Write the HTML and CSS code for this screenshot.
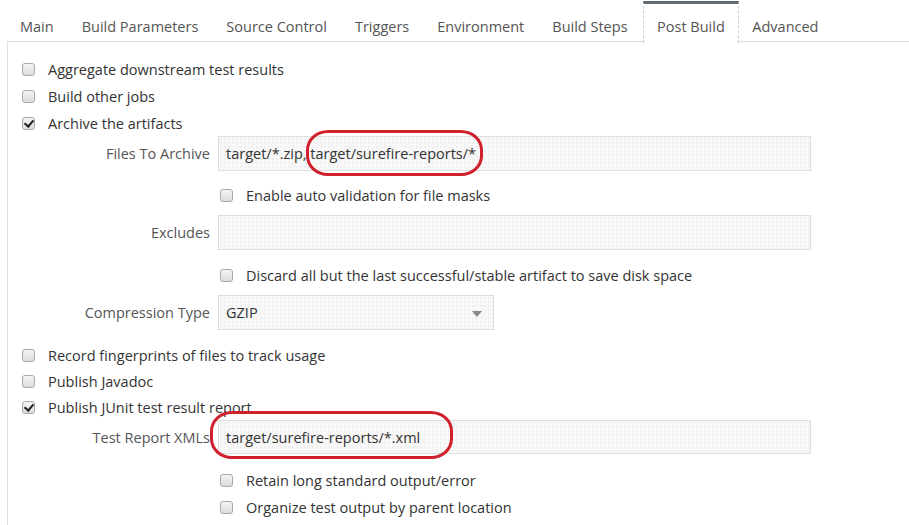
FILE: index.html
```html
<!DOCTYPE html>
<html>
<head>
<meta charset="utf-8">
<link rel="stylesheet" href="styles.css">
</head>
<body>
<div class="page">
  <ul class="tabs">
    <li class="tab">Main</li>
    <li class="tab">Build Parameters</li>
    <li class="tab">Source Control</li>
    <li class="tab">Triggers</li>
    <li class="tab">Environment</li>
    <li class="tab">Build Steps</li>
    <li class="tab active">Post Build</li>
    <li class="tab">Advanced</li>
  </ul>
  <div class="panel">
    <div class="check"><span class="box"></span>Aggregate downstream test results</div>
    <div class="check"><span class="box"></span>Build other jobs</div>
    <div class="check"><span class="box checked"></span>Archive the artifacts</div>

    <div class="field first">
      <label class="lbl">Files To Archive</label>
      <div class="input wide">target/*.zip, target/surefire-reports/*<span class="mark mark1"></span></div>
    </div>
    <div class="check sub e1"><span class="box"></span>Enable auto validation for file masks</div>
    <div class="field">
      <label class="lbl">Excludes</label>
      <div class="input wide"></div>
    </div>
    <div class="check sub"><span class="box"></span>Discard all but the last successful/stable artifact to save disk space</div>
    <div class="field">
      <label class="lbl">Compression Type</label>
      <div class="input select">GZIP<span class="arrow"></span></div>
    </div>

    <div class="check top"><span class="box"></span>Record fingerprints of files to track usage</div>
    <div class="check tight"><span class="box"></span>Publish Javadoc</div>
    <div class="check tight"><span class="box checked"></span>Publish JUnit test result report</div>
    <div class="field junit">
      <label class="lbl">Test Report XMLs</label>
      <div class="input wide">target/surefire-reports/*.xml<span class="mark mark2"></span></div>
    </div>
    <div class="check sub"><span class="box"></span>Retain long standard output/error</div>
    <div class="check sub"><span class="box"></span>Organize test output by parent location</div>
  </div>
</div>
</body>
</html>
```
FILE: styles.css
```css
* { box-sizing: border-box; }
html, body { margin: 0; padding: 0; background: #fff; }
body {
  font-family: "Open Sans", "Noto Sans", sans-serif;
  font-size: 14.5px;
  color: #333;
  width: 909px;
  height: 525px;
  overflow: hidden;
}
.page { padding-left: 7px; }
.tabs {
  list-style: none;
  margin: 0;
  padding: 0;
  display: flex;
  height: 42px;
  border-bottom: 1px solid #dcdcdc;
}
.tab {
  padding: 17px 15px 0 13px;
  color: #555;
  line-height: 20px;
  white-space: nowrap;
}
.tab.active {
  margin-top: 1px;
  padding-top: 13px;
  padding-left: 13.5px;
  padding-right: 13.5px;
  border-top: 3px solid #606b76;
  border-left: 1px dashed #cfcfcf;
  border-right: 1px dashed #cfcfcf;
  background: #fff;
  height: 42px;
  margin-bottom: -1px;
}
.panel {
  border-left: 1px solid #e0e0e0;
  padding-top: 14px;
  height: 500px;
}
.check {
  display: flex;
  align-items: center;
  height: 27px;
  padding-left: 14px;
  color: #333;
  white-space: nowrap;
}
.check.tight { height: 26px; }
.check.top { height: 26px; }
.check.sub { padding-left: 212px; }
.field + .check { margin-top: 12px; }
.field + .check.e1 { margin-top: 11px; }
.field + .check.top { margin-top: 12px; }
.field.junit + .check { margin-top: 13px; }
.check.sub + .field { margin-top: 6px; }
.box {
  width: 13px;
  height: 13px;
  border: 1px solid #a9a9a9;
  border-radius: 3px;
  background: linear-gradient(#f4f4f4, #dcdcdc);
  margin-right: 13px;
  position: relative;
  flex: none;
}
.box.checked::after {
  content: "";
  position: absolute;
  left: 3px;
  top: 0px;
  width: 4px;
  height: 7px;
  border: solid #222;
  border-width: 0 2px 2px 0;
  transform: rotate(40deg);
}
.field {
  display: flex;
  align-items: center;
  height: 35px;
}
.field.first { margin-top: -1px; }
.field.junit { height: 34px; }
.lbl {
  width: 210px;
  text-align: right;
  color: #555;
  padding-right: 8px;
  white-space: nowrap;
}
.input {
  position: relative;
  height: 100%;
  border: 1px solid #dedede;
  background-color: #f8f8f8;
  background-image: radial-gradient(#e6e6e6 0.6px, transparent 0.8px);
  background-size: 4px 4px;
  display: flex;
  align-items: center;
  padding-left: 7px;
  color: #333;
  white-space: nowrap;
}
.input.wide { width: 593px; }
.input.select { width: 276px; }
.arrow {
  position: absolute;
  right: 11px;
  top: 15px;
  width: 0;
  height: 0;
  border-left: 5px solid transparent;
  border-right: 5px solid transparent;
  border-top: 6px solid #888;
}
.mark {
  position: absolute;
  border: 3px solid #d01f2d;
  border-radius: 22px / 20px;
  pointer-events: none;
}
.mark1 { left: 87px; top: -7px; width: 177px; height: 46px; }
.mark2 { left: -9px; top: -10px; width: 243px; height: 48px; }
```
